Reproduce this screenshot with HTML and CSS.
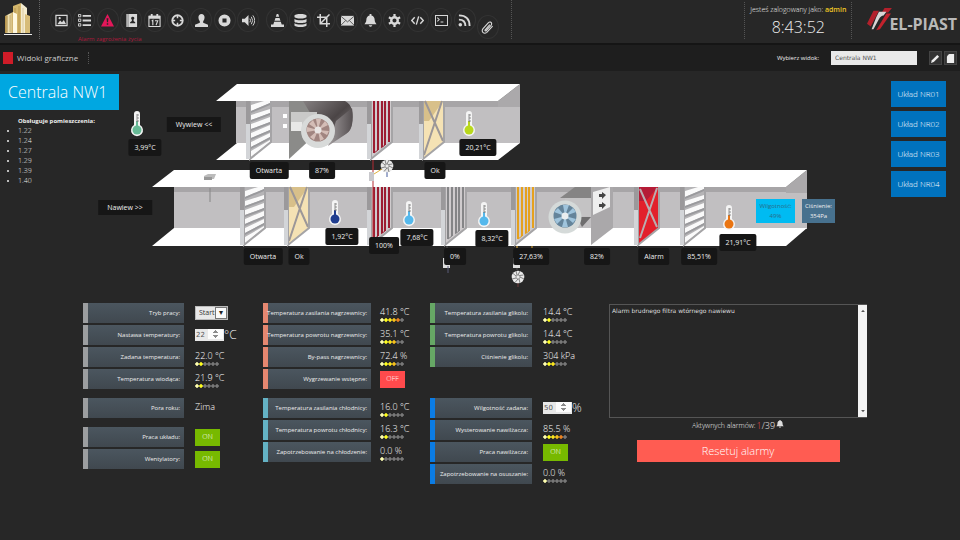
FILE: index.html
```html
<!DOCTYPE html>
<html lang="pl">
<head>
<meta charset="utf-8">
<title>Centrala NW1</title>
<link rel="stylesheet" href="styles.css">
</head>
<body>
<header class="topbar">
  <a class="home" href="#" aria-label="Start">
    <svg width="30" height="34" viewBox="0 0 30 34"><defs><linearGradient id="gold" x1="0" x2="1"><stop offset="0" stop-color="#b08a3c"/><stop offset=".5" stop-color="#f6ecc4"/><stop offset="1" stop-color="#c9aa62"/></linearGradient></defs><path d="M10 4l8-3v30h-8z" fill="#d3b66c"/><path d="M18 1l6 5v25h-6z" fill="#f4ecd0"/><path d="M2 14l8-4v21H2z" fill="url(#gold)"/><path d="M10 10l4 2v19h-4z" fill="#fff8e0"/><path d="M22 12l5 2v17h-5z" fill="#d7bc78"/><path d="M12 6v5M16 4v27M4 14v16M7 13v17" stroke="#a5833c" stroke-width=".6"/><path d="M20 6v25" stroke="#cdb67f" stroke-width=".6"/><path d="M1 32.500h28" stroke="#eee"/></svg>
  </a>
  <nav class="tools" aria-label="Narzędzia">
    <div class="tool-group first">
      <a href="#" aria-label="Obrazy"><svg viewBox="0 0 14 14"><path d="M1 1.500h12v11H1z" fill="none" stroke="currentColor" stroke-width="1.300"/><path d="M2.500 11l3-4 2 2 2-2.500 2.500 4.500z"/><circle cx="5" cy="4.500" r="1.200"/></svg></a>
      <a href="#" aria-label="Lista"><svg viewBox="0 0 14 14"><path d="M5 1h9v2H5zM5 6h9v2H5zM5 11h9v2H5z"/><path d="M.5.500h2.500v2.500H.5zM.5 5.500h2.500v2.500H.5zM.5 10.500h2.500v2.500H.5z" fill="none" stroke="currentColor"/></svg></a>
      <a href="#" class="danger" aria-label="Alarm"><svg viewBox="0 0 14 14"><path fill-rule="evenodd" d="M7 0l7 13.500H0zM6 4.500l.4 4.500h1.200L8 4.500zM6.200 10v1.700h1.600V10z"/></svg></a>
      <a href="#" aria-label="Kontakty"><svg viewBox="0 0 14 14"><path d="M1.500 0H3v14H1.500z"/><path fill-rule="evenodd" d="M3.500 0H13v14H3.500zM8.200 3a1.600 1.600 0 0 0-.8 3v1.500L5.500 9v1h5.500V9L9.200 7.500V6a1.600 1.600 0 0 0-1-3z"/></svg></a>
      <a href="#" aria-label="Kalendarz"><svg viewBox="0 0 14 14"><path d="M1 2.500h12v11H1z" fill="none" stroke="currentColor" stroke-width="1.200"/><path d="M1 2h12v3H1zM3 0h2v3H3zM9 0h2v3H9z"/><path d="M4 7.500l1.200-.7V12M7.500 7.200h3L8.700 12" fill="none" stroke="currentColor" stroke-width="1.200"/></svg></a>
      <a href="#" aria-label="Cel"><svg viewBox="0 0 14 14"><circle cx="7" cy="7" r="5.600" fill="none" stroke="currentColor" stroke-width="2"/><path d="M6.200 1h1.600v3.500H6.200zM6.200 9.500h1.600V13H6.200zM1 6.200h3.500v1.600H1zM9.500 6.200H13v1.600H9.500z"/></svg></a>
      <a href="#" aria-label="Użytkownik"><svg viewBox="0 0 14 14"><path d="M7 0c2 0 3.300 1.400 3.300 3.500S9.500 7 8.800 7.700v1.600L14 11.500V14H0v-2.500l5.200-2.200V7.700C4.500 7 3.700 5.600 3.700 3.500S5 0 7 0z"/></svg></a>
      <a href="#" aria-label="Zatrzymaj"><svg viewBox="0 0 14 14"><path fill-rule="evenodd" d="M7 .5a6.500 6.500 0 1 0 0 13 6.500 6.500 0 0 0 0-13zM4.800 4.800h4.400v4.400H4.800z"/></svg></a>
      <a href="#" aria-label="Dźwięk"><svg viewBox="0 0 14 14"><path d="M0 5h3l4-4v12L3 9H0z"/><path d="M8.500 5q1.500 2 0 4M10 3q3 4 0 8M11.700 1.500q4 5.500 0 11" fill="none" stroke="currentColor"/></svg></a>
    </div>
    <div class="tool-group second">
      <a href="#" aria-label="Serwis"><svg viewBox="0 0 14 14"><path d="M6.200 0h1.600l1 3H5.200zM4.800 4.200h4.400l1 3H3.800zM3.400 8.400h7.200l.9 3H14V14H0v-2.600h2.500z"/></svg></a>
      <a href="#" aria-label="Baza danych"><svg viewBox="0 0 14 14"><path d="M.5 2c0-2.500 13-2.500 13 0v1c0 2.500-13 2.500-13 0zM.5 5.500c2 1.800 11 1.800 13 0V8c0 2.200-13 2.200-13 0zM.5 10c2 1.800 11 1.800 13 0v2c0 2.500-13 2.500-13 0z"/></svg></a>
      <a href="#" aria-label="Kadruj"><svg viewBox="0 0 14 14"><path d="M3.500 0v10.500H14M0 3.500h10.500V14M4 10l9.500-9.500" fill="none" stroke="currentColor" stroke-width="1.600"/></svg></a>
      <a href="#" aria-label="Poczta"><svg viewBox="0 0 14 14"><path d="M0 2h14v10.500H0z"/><path d="M0 2.500l7 6 7-6M0 12l5-5M14 12L9 7" fill="none" stroke="#333" stroke-width=".8"/></svg></a>
      <a href="#" aria-label="Powiadomienia"><svg viewBox="0 0 14 14"><path d="M6 0h2v1.500c2.500.5 3.500 2.500 3.500 5 0 2 1 3 2 4.500H.5c1-1.500 2-2.500 2-4.500 0-2.500 1-4.500 3.500-5zM5 12h4q-2 3.500-4 0z"/></svg></a>
      <a href="#" aria-label="Ustawienia"><svg viewBox="0 0 14 14"><circle cx="7" cy="7" r="3.500" fill="none" stroke="currentColor" stroke-width="2.600"/><path d="M7 0v3M7 11v3M1 3.500L3.500 5M10.500 9l2.500 1.500M1 10.500L3.500 9M10.500 5L13 3.500" stroke="currentColor" stroke-width="2.400"/></svg></a>
      <a href="#" aria-label="Kod"><svg viewBox="0 0 14 14"><path d="M4 3.500L.8 7 4 10.500M10 3.500L13.200 7 10 10.500M8.300 2.500l-2.600 9" fill="none" stroke="currentColor" stroke-width="1.500"/></svg></a>
      <a href="#" aria-label="Konsola"><svg viewBox="0 0 14 14"><path d="M.5 1.500h13v11H.5zM2.500 4l2 2-2 2M6 8.500h3" fill="none" stroke="currentColor" stroke-width="1.100"/></svg></a>
      <a href="#" aria-label="RSS"><svg viewBox="0 0 14 14"><circle cx="2.500" cy="11.500" r="1.900"/><path d="M1 6q7 0 7 7M1 1.500q11.500 0 11.500 11.500" fill="none" stroke="currentColor" stroke-width="2"/></svg></a>
      <a href="#" class="clip" aria-label="Załączniki"><svg viewBox="0 0 14 14"><path d="M9.500 4L4.500 9.500q-.7 1.500.8 1.200l5.500-6q1.500-2.500-.5-3.500-1.300-.5-2.500.8L2 8.500Q.5 11 2.300 12.500t4-.3L12.500 5.500" fill="none" stroke="currentColor" stroke-width="1.200"/></svg></a>
    </div>
    <span class="warning">Alarm zagrożenia życia</span>
  </nav>
  <div class="user">
    <div class="login">Jesteś zalogowany jako: <b>admin</b></div>
    <time class="clock">8:43:52</time>
  </div>
  <div class="brand">
    <svg width="26" height="24" viewBox="0 0 28 26"><path d="M8 3h6L5 20l-4-3zM20 0h8l-4 5h-7z" fill="#b3202b"/><path d="M14 4h8l-3 4q-3 0-5 4L8 23H6l5-13z" fill="#d9d4d4"/><path d="M22 6h5L15 23l-4 1z" fill="#c2222c"/></svg>
    <span>EL-PIAST</span>
  </div>
</header>

<div class="subbar">
  <h2>Widoki graficzne</h2>
  <label for="view">Wybierz widok:</label>
  <select id="view"><option>Centrala NW1</option></select>
  <button type="button" aria-label="Edytuj"><svg viewBox="0 0 10 10"><path d="M0 10l1-3 6-6 2 2-6 6z"/></svg></button>
  <button type="button" aria-label="Nowy"><svg viewBox="0 0 10 10"><path d="M4 0h5v10H1V3zM3.500 0v2.500H1z"/></svg></button>
</div>

<main>
<section class="plant">
  <div class="canvas">
    <svg class="drawing" width="960" height="223" viewBox="0 72 960 223" aria-hidden="true">
      <defs>
        <linearGradient id="drum" x1="0" x2="1" y1="0" y2="1"><stop offset="0" stop-color="#858081"/><stop offset=".5" stop-color="#4b4546"/><stop offset="1" stop-color="#9c9798"/></linearGradient>
        <linearGradient id="drumSide" x1="0" x2="1"><stop offset="0" stop-color="#a19c9d"/><stop offset="1" stop-color="#544e50"/></linearGradient>
        <g id="frame">
          <path d="M25 0V41L4 58V0" fill="none" stroke="#a5a4a6" stroke-width="2"/>
          <path d="M0 0h4v24H0z" fill="#9b999b"/><path d="M0 23h4v35H0z" fill="#d3d5d8"/>
        </g>
        <g id="louver">
          <path d="M4 0H25V41L4 58z" fill="#b5b4b6"/>
          <path d="M5 4L18 0h6v2L5 10zM5 14l19-6v4L5 19zM5 23l19-7v5L5 28zM5 32l19-8v5L5 37zM5 41l19-9v4L5 46zM5 50l19-11v2L5 56z" fill="#fafafa"/>
          <path d="M5 10L24 2v2L5 12zM5 19l19-7v2L5 21zM5 28l19-7v2L5 30zM5 37l19-8v2L5 39zM5 46l19-10v2L5 48z" fill="#9a9a9d"/>
          <use href="#frame"/>
        </g>
        <g id="filter">
          <path d="M4 0H25V41L4 58z" fill="#f5e2b4"/><path d="M5 0h19L10 20H5z" fill="#d8c08a"/>
          <path d="M6 0L24 40M23 0L5 54" stroke="#9c9798" stroke-width="2"/>
          <use href="#frame"/>
        </g>
        <g id="coil">
          <path d="M4 0H25V41L4 58z" fill="#cfcbcd"/>
          <path d="M7 0V52M11 0V49M15 0V46M18 0V44M22 0V41" stroke="currentColor" stroke-width="2"/>
          <path d="M7 52l4-3M14 47l4-3" stroke="currentColor"/>
          <use href="#frame"/>
        </g>
        <g id="thermo">
          <path d="M-3-16a3 3 0 0 1 6 0V-5A6 6 0 1 1-3-5z" fill="#f4f4f4"/>
          <path d="M-1-9h2v6h-2z" fill="currentColor"/><circle r="4.500" fill="currentColor"/>
          <path d="M0-16v8M0-15h2M0-12h2M0-9h2" stroke="#777" stroke-width=".8"/>
        </g>
        <g id="wheel">
          <circle r="6.300" fill="#e9e9e9"/><circle r="2" fill="none" stroke="#777" stroke-width=".7"/>
          <path d="M0-2l2-4M1.500-1.500L5.500-2M2 0l4 2M1 2l1 4M0 2l-3 3.500M-2 1l-4 1M-2-1l-3.500-3M-1-2l-1-4" stroke="#666" stroke-width=".8"/>
        </g>
      </defs>
      <!-- exhaust duct -->
      <path d="M236 101h284v42H236z" fill="#c1bfc1"/><path d="M236 101h284v6H236z" fill="#a7a5a7"/>
      <path d="M498 101l22-17v23h-22z" fill="#aba9ab"/>
      <path d="M237 84h283l-22 17H216zM237 143h283l-22 17H216z" fill="#fff"/>
      <use href="#louver" x="246" y="101"/>
      <path d="M283 114h4v4h-4zM283 124h4v4h-4z" fill="#fff"/>
      <path d="M289 101h25v35l-25 23z" fill="#8b8b89"/>
      <path d="M303 101h42c8 4 8 13 7 22q-1 8-5 10l-22 13-10-25z" fill="url(#drum)"/>
      <path d="M336 121l16-13q3 20-6 26l-18 12z" fill="url(#drumSide)"/>
      <path d="M291 112h26v18h-26z" fill="#c9c9c8"/><path d="M291 122h11v9h-11z" fill="#e8e8e7"/>
      <circle cx="318" cy="131" r="17" fill="#d8dad9"/><circle cx="318" cy="130" r="11.500" fill="#a18580"/>
      <path d="M318 130l-2-11h5zM318 130l7-9 3 4zM318 130l11 1-2 4zM318 130l6 9-4 2zM318 130l-4 10-4-3zM318 130l-11 2 0-5zM318 130l-9-6 4-4z" fill="#d4bdb6"/>
      <circle cx="318" cy="130" r="3.500" fill="#e9e5e3"/>
      <use href="#coil" x="367" y="101" color="#9c1d31"/>
      <use href="#filter" x="419" y="101"/>
      <!-- supply duct -->
      <path d="M174 187h633v42H174z" fill="#c1bfc1"/><path d="M174 187h633v5H174z" fill="#a7a5a7"/>
      <path d="M786 187l21-17v23h-21z" fill="#aba9ab"/>
      <path d="M174 170h633l-21 17H152zM174 228h633l-21 18H152z" fill="#fff"/>
      <path d="M204 176l4-2h8l-2 5h-10z" fill="#bbb"/><path d="M204 177h8v3h-8z" fill="#989898"/><path d="M210 188v14" stroke="#858585"/>
      <use href="#louver" x="240" y="187"/>
      <use href="#filter" x="284" y="187"/>
      <use href="#coil" x="367" y="187" color="#9c1d31"/>
      <use href="#coil" x="441" y="187" color="#858587"/>
      <use href="#coil" x="511" y="187" color="#e5a11d"/>
      <path d="M560 198l15-11h16v11z" fill="#858484"/><path d="M591 187h22v41l-22 17z" fill="#aaa8aa"/>
      <path d="M593 192l17-5v20l-17 8z" fill="#eee"/>
      <path d="M599 194h3v-2l4 3-4 4v-2h-3zM599 204h3v-2l4 3-4 4v-2h-3z" fill="#444"/>
      <path d="M565 198h26v18h-26z" fill="#c4c3c4"/><path d="M577 217h14l-9 10z" fill="#6f6e6f"/>
      <circle cx="565" cy="217" r="16.500" fill="#d5dad9"/><circle cx="565" cy="216" r="11.500" fill="#64849a"/>
      <path d="M565 216l-2-11h6zM565 216l8-8 3 4zM565 216l11 3-3 4zM565 216l3 11h-6zM565 216l-8 8-3-5zM565 216l-11-4 4-4z" fill="#9fc4dc"/>
      <circle cx="565" cy="216" r="3.500" fill="#e9eef0"/>
      <path d="M638 187h21v41l-21 17z" fill="#e2202b"/><path d="M639 187h19l-12 14h-7z" fill="#b51b36"/>
      <path d="M640 189l17 38M657 188l-17 50" stroke="#b9adb0" stroke-width="2"/><use href="#frame" x="634" y="187"/>
      <use href="#louver" x="680" y="187"/>
      <!-- valves -->
      <path d="M373 160v94" stroke="#b32d35"/><path d="M369 172h5v9h-5z" fill="#c8c8cc"/><path d="M374 174l8-5" stroke="#e0b03c"/><path d="M387 170v7" stroke="#445a9b"/>
      <use href="#wheel" x="387" y="166"/>
      <path d="M447 246v20M517 246v24" stroke="#555"/><path d="M443 258h4v6h3v4h-7zM513 258h4v6h3v4h-7z" fill="#ddd"/><path d="M448 266v7" stroke="#5b5d78"/><path d="M518 278v9" stroke="#6c3a3a"/><path d="M517 246v6M532 246v4" stroke="#e0a52c"/>
      <use href="#wheel" x="518" y="277"/>
      <!-- sensors -->
      <use href="#thermo" x="137" y="130" color="#67ba96"/>
      <use href="#thermo" x="469" y="130" color="#b9d81c"/>
      <use href="#thermo" x="335" y="219" color="#203d8f"/>
      <use href="#thermo" x="409" y="220" color="#55b8ec"/>
      <use href="#thermo" x="484" y="221" color="#55b8ec"/>
      <use href="#thermo" x="729" y="224" color="#ea7512"/>
    </svg>
    <span class="tag flow t-exhaust">Wywiew &lt;&lt;</span>
    <span class="tag flow t-supply">Nawiew &gt;&gt;</span>
    <span class="tag t-outdoor">3,99°C</span>
    <span class="tag t-ex-damper">Otwarta</span>
    <span class="tag t-ex-fan">87%</span>
    <span class="tag t-ex-filter">Ok</span>
    <span class="tag t-ex-temp">20,21°C</span>
    <span class="tag t-su-temp1">1,92°C</span>
    <span class="tag t-recovery">100%</span>
    <span class="tag t-su-temp2">7,68°C</span>
    <span class="tag t-su-temp3">8,32°C</span>
    <span class="tag t-su-temp4">21,91°C</span>
    <span class="tag t-su-damper">Otwarta</span>
    <span class="tag t-su-filter">Ok</span>
    <span class="tag t-cooler">0%</span>
    <span class="tag t-heater">27,63%</span>
    <span class="tag t-su-fan">82%</span>
    <span class="tag t-alarm">Alarm</span>
    <span class="tag t-humidifier">85,51%</span>
    <span class="reading humidity">Wilgotność:<br>49%</span>
    <span class="reading pressure">Ciśnienie:<br>354Pa</span>
  </div>
  <div class="info">
    <h1>Centrala NW1</h1>
    <div class="rooms">
      <h3>Obsługuje pomieszczenia:</h3>
      <ul><li>1.22</li><li>1.24</li><li>1.27</li><li>1.29</li><li>1.39</li><li>1.40</li></ul>
    </div>
  </div>
  <nav class="units" aria-label="Układy">
    <a href="#">Układ NR01</a><a href="#">Układ NR02</a><a href="#">Układ NR03</a><a href="#">Układ NR04</a>
  </nav>
</section>

<section class="panels">
  <div class="column">
    <div class="group grey lead">
      <div class="row"><label for="mode">Tryb pracy:</label><div class="field"><span class="pick"><select id="mode"><option>Start</option></select></span></div></div>
      <div class="row"><label for="setpoint">Nastawa temperatury:</label><div class="field entry"><input id="setpoint" type="number" value="22"><span class="unit">°C</span></div></div>
      <div class="row"><span class="name">Zadana temperatura:</span><div class="value">22.0 °C<i class="dots" style="--lit:2"></i></div></div>
      <div class="row"><span class="name">Temperatura wiodąca:</span><div class="value">21.9 °C<i class="dots" style="--lit:2"></i></div></div>
    </div>
    <div class="group grey">
      <div class="row"><span class="name">Pora roku:</span><div class="value">Zima</div></div>
    </div>
    <div class="group grey">
      <div class="row"><span class="name">Praca układu:</span><div class="field"><button type="button" class="switch on">ON</button></div></div>
      <div class="row"><span class="name">Wentylatory:</span><div class="field"><button type="button" class="switch on">ON</button></div></div>
    </div>
  </div>
  <div class="column">
    <div class="group heat lead">
      <div class="row"><span class="name">Temperatura zasilania nagrzewnicy:</span><div class="value">41.8 °C<i class="dots" style="--lit:5"></i></div></div>
      <div class="row"><span class="name">Temperatura powrotu nagrzewnicy:</span><div class="value">35.1 °C<i class="dots" style="--lit:4"></i></div></div>
      <div class="row"><span class="name">By-pass nagrzewnicy:</span><div class="value">72.4 %<i class="dots" style="--lit:4"></i></div></div>
      <div class="row"><span class="name">Wygrzewanie wstępne:</span><div class="field"><button type="button" class="switch off">OFF</button></div></div>
    </div>
    <div class="group cool">
      <div class="row"><span class="name">Temperatura zasilania chłodnicy:</span><div class="value">16.0 °C<i class="dots" style="--lit:2"></i></div></div>
      <div class="row"><span class="name">Temperatura powrotu chłodnicy:</span><div class="value">16.3 °C<i class="dots" style="--lit:2"></i></div></div>
      <div class="row"><span class="name">Zapotrzebowanie na chłodzenie:</span><div class="value">0.0 %<i class="dots" style="--lit:1"></i></div></div>
    </div>
  </div>
  <div class="column">
    <div class="group glycol lead">
      <div class="row"><span class="name">Temperatura zasilania glikolu:</span><div class="value">14.4 °C<i class="dots" style="--lit:2"></i></div></div>
      <div class="row"><span class="name">Temperatura powrotu glikolu:</span><div class="value">14.4 °C<i class="dots" style="--lit:2"></i></div></div>
      <div class="row"><span class="name">Ciśnienie glikolu:</span><div class="value">304 kPa<i class="dots" style="--lit:3"></i></div></div>
    </div>
    <div class="group humid">
      <div class="row"><label for="humidity">Wilgotność zadana:</label><div class="field entry"><input id="humidity" type="number" value="50"><span class="unit">%</span></div></div>
      <div class="row"><span class="name">Wysterowanie nawilżacza:</span><div class="value">85.5 %<i class="dots" style="--lit:5"></i></div></div>
      <div class="row"><span class="name">Praca nawilżacza:</span><div class="field"><button type="button" class="switch on">ON</button></div></div>
      <div class="row"><span class="name">Zapotrzebowanie na osuszanie:</span><div class="value">0.0 %<i class="dots" style="--lit:1"></i></div></div>
    </div>
  </div>
  <div class="alarms">
    <div class="log">
      <textarea readonly aria-label="Lista alarmów">Alarm brudnego filtra wtórnego nawiewu</textarea>
      <div class="scroll" aria-hidden="true"><svg viewBox="0 0 5 4"><path d="M0 4l2.500-3L5 4z"/></svg><svg viewBox="0 0 5 4"><path d="M0 0l2.500 3L5 0z"/></svg></div>
    </div>
    <p>Aktywnych alarmów: <span class="count"><em>1</em>/39</span><svg viewBox="0 0 14 14"><path d="M6 0h2v1.500c2.500.5 3.500 2.500 3.500 5 0 2 1 3 2 4.500H.5c1-1.500 2-2.500 2-4.500 0-2.500 1-4.500 3.500-5zM5 12h4q-2 3.500-4 0z"/></svg></p>
    <button type="button" class="reset">Resetuj alarmy</button>
  </div>
</section>
</main>
</body>
</html>
```
FILE: styles.css
```css
* { box-sizing: border-box; }
body { margin: 0; min-height: 100vh; background: #272727; color: #eee; font: 300 7px/10px "Open Sans", "Noto Sans", sans-serif; }
h1, h2, h3, p, ul { margin: 0; padding: 0; font-weight: 300; }
a { color: inherit; text-decoration: none; }
button, select, input, textarea { font: inherit; border: 0; border-radius: 0; margin: 0; }
svg { display: block; fill: currentColor; }

.topbar { display: flex; align-items: stretch; height: 45px; border-bottom: 2px solid #151515; }
.home { width: 40px; padding: 2px 0 0 3px; margin-bottom: 4px; border-right: 1px dotted #666; }
.tools { position: relative; display: flex; gap: 7px; padding: 8px 12px 0 10px; margin-bottom: 4px; border-right: 1px dotted #555; }
.tool-group { display: flex; justify-content: space-between; color: #d8d8d8; }
.first { width: 209px; }
.second { width: 233px; }
.tool-group a { width: 22px; height: 24px; display: grid; place-items: center; border: 1px solid #333; border-radius: 50%; }
.tool-group svg { width: 13px; height: 13px; }
.tool-group .danger { color: #e3175a; }
.tool-group .clip { margin-top: 7px; }
.warning { position: absolute; left: 38px; top: 34px; color: #b0183c; font-size: 6px; font-weight: 400; }
.user { margin: 2px 0 4px auto; padding: 3px 5px 0; text-align: center; border-left: 1px dotted #555; border-right: 1px dotted #555; font-size: 7px; }
.login b { color: #f0c825; font-weight: 600; }
.clock { display: block; font-size: 16px; line-height: 24px; }
.brand { display: flex; align-items: center; padding: 0 3px 4px 14px; color: #b9b9b9; font: 700 16px/20px "Open Sans", sans-serif; }
.brand svg { margin-right: -3px; }
.brand span { padding-top: 8px; }

.subbar { display: flex; align-items: center; height: 26px; padding: 0 3px; background: #1e1e1e; }
.subbar h2 { display: flex; align-items: center; gap: 4px; margin-right: auto; padding-right: 10px; border-right: 1px dotted #555; font-size: 8px; font-weight: 400; line-height: 12px; color: #ccc; }
.subbar h2::before { content: ""; width: 10px; height: 12px; background: #cf1c28; }
.subbar label { margin-right: 12px; font-size: 6px; font-weight: 400; }
.subbar select { appearance: none; width: 86px; height: 14px; margin-right: 10px; padding: 0 4px; background: #e9e9e9; color: #555; font: 6px/14px "DejaVu Sans", sans-serif; }
.subbar button { width: 13px; height: 14px; margin-left: 2px; padding: 1px; background: #333; border: 1px solid #444; color: #eee; }
.subbar button svg { width: 9px; height: 9px; }

.plant { display: grid; grid-template-columns: auto 1fr auto; padding-top: 1px; }
.canvas { grid-area: 1 / 1 / 2 / 4; position: relative; }
.info { grid-area: 1 / 1; padding-top: 2px; z-index: 1; justify-self: start; }
.info h1 { padding: 5px 12px 5px 8px; background: #00a7e1; color: #fff; font-size: 16px; line-height: 26px; }
.rooms { padding: 6px 0 0 18px; font-weight: 400; }
.rooms h3 { font-size: 6px; font-weight: 700; line-height: 10px; }
.units { grid-area: 1 / 3; z-index: 1; display: flex; flex-direction: column; gap: 4px; padding: 9px 14px 0 0; }
.units a { width: 55px; background: #0072be; color: #fff; font-size: 8px; line-height: 26px; text-align: center; }

.tag { position: absolute; transform: translateX(-50%); padding: 0 6px; background: #161616; border-radius: 2px; font-size: 7px; font-weight: 400; line-height: 17px; white-space: nowrap; }
.flow { padding: 0 9px; line-height: 15px; border-radius: 0; }
.t-exhaust { left: 194px; top: 45px; }
.t-supply { left: 125px; top: 128px; }
.t-outdoor { left: 145px; top: 67px; }
.t-ex-damper { left: 269px; top: 90px; }
.t-ex-fan { left: 322px; top: 90px; }
.t-ex-filter { left: 435px; top: 90px; }
.t-ex-temp { left: 478px; top: 67px; }
.t-su-temp1 { left: 342px; top: 156px; }
.t-recovery { left: 384px; top: 165px; }
.t-su-temp2 { left: 417px; top: 157px; }
.t-su-temp3 { left: 492px; top: 158px; }
.t-su-temp4 { left: 738px; top: 162px; }
.t-su-damper { left: 263px; top: 176px; }
.t-su-filter { left: 299px; top: 176px; }
.t-cooler { left: 455px; top: 176px; }
.t-heater { left: 531px; top: 176px; }
.t-su-fan { left: 597px; top: 176px; }
.t-alarm { left: 654px; top: 176px; }
.t-humidifier { left: 699px; top: 176px; }
.reading { position: absolute; top: 127px; padding: 2px 0; text-align: center; font-size: 6px; font-weight: 400; }
.humidity { left: 756px; width: 39px; background: #00bbf2; color: #2a6c88; }
.pressure { left: 802px; width: 33px; background: #47718e; }

.panels { display: flex; align-items: flex-start; padding: 8px 20px 0 83px; }
.column { display: flex; flex-direction: column; gap: 9px; }
.column:nth-child(1) { --name: 101px; --gap: 11px; width: 180px; }
.column:nth-child(2) { --name: 108px; --gap: 9px; width: 167px; }
.column:nth-child(3) { --name: 102px; --gap: 11px; width: 179px; }
.group { display: flex; flex-direction: column; gap: 2px; }
.lead { min-height: 86px; }
.row { display: grid; grid-template-columns: var(--name) 1fr; gap: var(--gap); height: 20px; }
.row > label, .name { display: flex; align-items: center; justify-content: flex-end; padding-right: 4px; border-left: 5px solid var(--accent); background: linear-gradient(#4b565f, #40484f); font-size: 6px; font-weight: 400; white-space: nowrap; }
.grey { --accent: #9c9ea0; }
.heat { --accent: #e58770; }
.cool { --accent: #64b2c4; }
.glycol { --accent: #66a765; }
.humid { --accent: #0b7ce4; }
.value { padding-top: 3px; color: #fff; font-size: 9px; line-height: 12px; white-space: nowrap; }
.dots { display: block; width: 24px; height: 4px;
  background:
    linear-gradient(#787878, #787878) right / calc((6 - var(--lit)) * 4px) 4px no-repeat,
    linear-gradient(90deg, #ffffb0 4px, #ffff20 4px 8px, #fbe51e 8px 12px, #f5c01d 12px 16px, #ea8220 16px 20px, #df5728 20px);
  mask: radial-gradient(circle closest-side, #000 70%, transparent 105%) 0 0 / 4px 4px; }
.field { display: flex; align-items: center; }
.switch { width: 25px; height: 17px; padding: 0; color: #fff; font-size: 7px; text-align: center; }
.on { background: #77b900; }
.off { background: #ff4a4c; }
.pick { position: relative; }
.pick select { appearance: none; width: 33px; height: 14px; padding: 0 3px; background: #e8e8e8; border: 1px solid #bbb; color: #333; font: 400 7px/12px "Open Sans", sans-serif; }
.pick::after { content: "▾"; position: absolute; right: 1px; top: 1px; width: 10px; background: #fafafa; border: 1px solid #777; color: #222; font: 8px/10px "DejaVu Sans", sans-serif; text-align: center; pointer-events: none; }
.entry input { width: 29px; height: 12px; padding: 0 1px; background: #e8e8e8; color: #555; font: 7px/12px "DejaVu Sans", sans-serif; }
.entry input::-webkit-inner-spin-button { opacity: 1; height: 11px; }
.unit { font-size: 12px; line-height: 16px; }

.alarms { width: 258px; padding-top: 1px; text-align: center; }
.log { display: flex; height: 114px; border: 1px solid #555; border-right: 0; }
.log textarea { flex: 1; padding: 1px 2px; resize: none; overflow: hidden; background: none; color: #ddd; font: 6px/10px "DejaVu Sans", sans-serif; }
.scroll { width: 9px; display: flex; flex-direction: column; justify-content: space-between; align-items: center; padding: 4px 0; background: #f3f3f3; color: #555; }
.scroll svg { width: 4px; height: 3px; }
.alarms p { display: flex; justify-content: center; align-items: center; height: 16px; gap: 1px; font-size: 7px; }
.alarms p svg { width: 8px; height: 10px; margin-bottom: 4px; color: #ddd; }
.count { font-size: 9px; }
.count em { color: #e0484a; font-style: normal; }
.reset { width: 203px; height: 22px; margin-top: 6px; padding: 0; background: #ff5c52; color: #fff; font-size: 11px; }
```
